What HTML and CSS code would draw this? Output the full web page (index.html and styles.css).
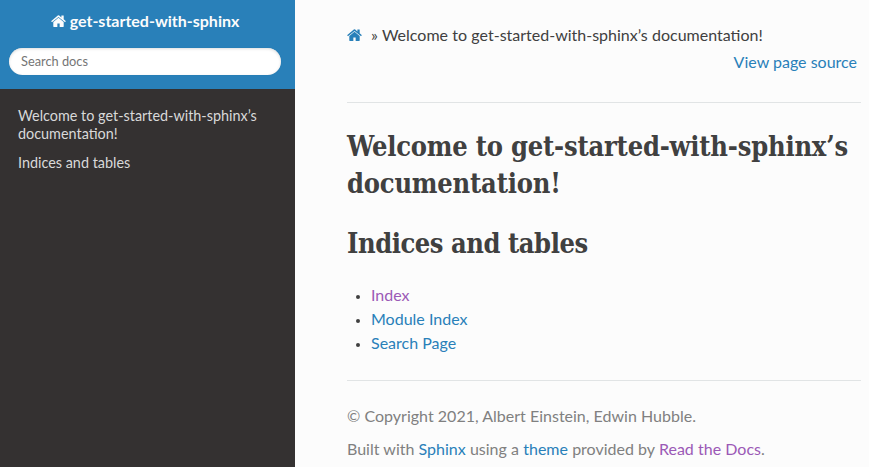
FILE: index.html
```html
<!DOCTYPE html>
<html lang="en">
<head>
<meta charset="utf-8">
<title>Welcome to get-started-with-sphinx’s documentation!</title>
<link rel="stylesheet" href="styles.css">
</head>
<body>
<div class="page">
  <nav class="side">
    <div class="side-search">
      <a class="brand" href="#"><svg class="home" viewBox="0 0 1664 1312"><path d="M1408 768v480q0 26-19 45t-45 19H960V928H704v384H320q-26 0-45-19t-19-45V768q0-1 .5-3t.5-3l575-474 575 474q1 2 1 6zm223-69l-62 74q-8 9-21 11h-3q-13 0-21-7L832 200 140 777q-12 8-24 7-13-2-21-11l-62-74q-8-10-7-23.500t11-21.500L756 55q32-26 76-26t76 26l244 204V64q0-14 9-23t23-9h192q14 0 23 9t9 23v408l219 182q10 8 11 21.500t-7 23.500z"/></svg><span>get-started-with-sphinx</span></a>
      <input class="search" type="text" placeholder="Search docs">
    </div>
    <ul class="menu">
      <li><a href="#">Welcome to get-started-with-sphinx’s documentation!</a></li>
      <li><a href="#">Indices and tables</a></li>
    </ul>
  </nav>
  <main class="content">
    <div class="crumbs"><a href="#" aria-label="Home"><svg class="home" viewBox="0 0 1664 1312"><path d="M1408 768v480q0 26-19 45t-45 19H960V928H704v384H320q-26 0-45-19t-19-45V768q0-1 .5-3t.5-3l575-474 575 474q1 2 1 6zm223-69l-62 74q-8 9-21 11h-3q-13 0-21-7L832 200 140 777q-12 8-24 7-13-2-21-11l-62-74q-8-10-7-23.500t11-21.500L756 55q32-26 76-26t76 26l244 204V64q0-14 9-23t23-9h192q14 0 23 9t9 23v408l219 182q10 8 11 21.500t-7 23.500z"/></svg></a><span class="trail">» Welcome to get-started-with-sphinx’s documentation!</span></div>
    <div class="source"><a href="#">View page source</a></div>
    <hr>
    <h1>Welcome to get-started-with-sphinx’s documentation!</h1>
    <h1 class="section">Indices and tables</h1>
    <ul class="links">
      <li><a class="visited" href="#">Index</a></li>
      <li><a href="#">Module Index</a></li>
      <li><a href="#">Search Page</a></li>
    </ul>
    <hr class="foot-rule">
    <footer>
      <p>© Copyright 2021, Albert Einstein, Edwin Hubble.</p>
      <p>Built with <a href="#">Sphinx</a> using a <a href="#">theme</a> provided by <a class="visited" href="#">Read the Docs</a>.</p>
    </footer>
  </main>
</div>
</body>
</html>
```
FILE: styles.css
```css
* { box-sizing: border-box; }
body {
  margin: 0;
  overflow: hidden;
  background: #fcfcfc;
  color: #404040;
  font: 16px/24px Lato, sans-serif;
}
a { color: #2980b9; text-decoration: none; }
a.visited { color: #9b59b6; }
.page { display: flex; height: 467px; }
.side { width: 295px; flex: none; background: #343131; }
.side-search {
  height: 89px;
  padding: 9px 14px 0 9px;
  background: #2980b9;
  text-align: center;
}
.brand { display: block; height: 39px; color: #fcfcfc; font-weight: 700; }
.home { width: 15px; height: 12px; fill: currentColor; }
.brand .home { margin-right: 4px; }
.search {
  display: block;
  width: 100%;
  height: 27px;
  padding: 0 12px 2px;
  border: 0;
  border-radius: 50px;
  background: #fff;
  box-shadow: inset 0 1px 3px #ddd, 0 0 1px #2472a4;
  font: 12.8px Lato, sans-serif;
}
.search::placeholder { color: #757575; }
.menu { margin: 0; padding: 18px 18px 0; list-style: none; }
.menu li { margin-bottom: 11px; font-size: 14.4px; line-height: 18px; }
.menu a { color: #d9d9d9; }
.content { flex: 1; min-width: 0; padding: 23px 8px 0 52px; }
.trail { margin-left: 9px; word-spacing: 0.2px; }
.source { margin-top: 3px; padding-right: 4px; text-align: right; }
hr { height: 1px; margin: 28px 0 25px; border: 0; background: #e1e4e5; }
h1 {
  margin: 0 0 23px;
  font: 700 27px/37px "Roboto Slab", "DejaVu Serif Condensed", "DejaVu Serif", serif;
  font-stretch: condensed;
  letter-spacing: -0.2px;
}
h1.section { margin-bottom: 21px; letter-spacing: -0.45px; }
.links { margin: 0; padding: 0 0 0 24px; }
.links li::marker { font-size: 12px; }
.foot-rule { margin: 25px 0 23px; }
footer { color: #808080; word-spacing: 0.1px; }
footer p { margin: 0 0 9px; }
```
